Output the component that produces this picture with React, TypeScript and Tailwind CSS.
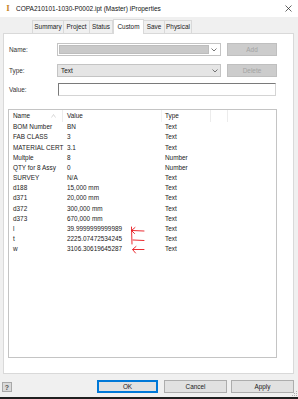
import React from "react";

const rows: [string, string, string][] = [
  ["BOM Number", "BN", "Text"],
  ["FAB CLASS", "3", "Text"],
  ["MATERIAL CERT", "3.1", "Text"],
  ["Multple", "8", "Number"],
  ["QTY for 8 Assy", "0", "Number"],
  ["SURVEY", "N/A", "Text"],
  ["d188", "15,000 mm", "Text"],
  ["d371", "20,000 mm", "Text"],
  ["d372", "300,000 mm", "Text"],
  ["d373", "670,000 mm", "Text"],
  ["l", "39.9999999999989", "Text"],
  ["t", "2225.07472534245", "Text"],
  ["w", "3106.30619645287", "Text"],
];

function Chevron() {
  return (
    <svg width="6" height="4" viewBox="0 0 6 4" className="shrink-0">
      <path d="M0.5 0.5 L3 3 L5.5 0.5" fill="none" stroke="#555" strokeWidth="0.8" />
    </svg>
  );
}

export default function App() {
  const tabs = ["Summary", "Project", "Status", "Custom", "Save", "Physical"];
  const tabW: Record<string, string> = {
    Summary: "w-[32px]",
    Project: "w-[27px]",
    Status: "w-[24px]",
    Custom: "w-[31px]",
    Save: "w-[22px]",
    Physical: "w-[28px]",
  };
  return (
    <div className="w-[298px] h-[399px] bg-[#f0f0f0] flex flex-col font-['Liberation_Sans',Arial,sans-serif] text-[6.4px] text-[#1a1a1a] overflow-hidden relative">
      {/* Title bar */}
      <div className="h-[17px] bg-white flex items-center shrink-0">
        <span className="ml-[4px] w-[8px] text-center font-['Liberation_Serif',serif] font-bold text-[9px] leading-none text-[#c8862a]">I</span>
        <span className="ml-[4px] text-[6.5px] text-[#111]">COPA210101-1030-P0002.ipt (Master) iProperties</span>
        <div className="flex-1" />
        <svg width="7" height="7" viewBox="0 0 7 7" className="mr-[6px]">
          <path d="M0.5 0.5 L6.5 6.5 M6.5 0.5 L0.5 6.5" stroke="#222" strokeWidth="0.7" />
        </svg>
      </div>

      {/* Tabs */}
      <div className="h-[16px] flex items-end pl-[32px] shrink-0">
        {tabs.map((t) =>
          t === "Custom" ? (
            <div
              key={t}
              className={`${tabW[t]} h-[15px] -mb-[1px] bg-white border border-b-0 border-[#d9d9d9] flex items-center justify-center relative z-10`}
            >
              {t}
            </div>
          ) : (
            <div
              key={t}
              className={`${tabW[t]} h-[13px] bg-[#f0f0f0] border border-b-0 border-[#d9d9d9] -ml-[1px] first:ml-0 flex items-center justify-center`}
            >
              {t}
            </div>
          )
        )}
      </div>

      {/* Panel */}
      <div className="ml-[3px] w-[291px] h-[341px] bg-white border border-[#d9d9d9] flex flex-col shrink-0">
        {/* Name row */}
        <div className="mt-[9px] flex items-center h-[13px] pl-[5px]">
          <div className="w-[48px] text-[#333]">Name:</div>
          <div className="w-[164px] h-[13px] border border-[#c4c4c4] bg-white flex items-center p-[1px]">
            <div className="flex-1 h-full bg-[#c9c9c9] border border-[#bdbdbd]" />
            <div className="w-[10px] flex items-center justify-center">
              <Chevron />
            </div>
          </div>
          <div className="ml-[6px] w-[50px] h-[13px] bg-[#cccccc] border border-[#bfbfbf] flex items-center justify-center text-[#a3a3a3]">
            Add
          </div>
        </div>
        {/* Type row */}
        <div className="mt-[8px] flex items-center h-[13px] pl-[5px]">
          <div className="w-[48px] text-[#333]">Type:</div>
          <div className="w-[164px] h-[13px] border border-[#c4c4c4] bg-[#e5e5e5] flex items-center pl-[3px]">
            <span className="flex-1">Text</span>
            <div className="w-[10px] flex items-center justify-center">
              <Chevron />
            </div>
          </div>
          <div className="ml-[6px] w-[50px] h-[13px] bg-[#cccccc] border border-[#bfbfbf] flex items-center justify-center text-[#a3a3a3]">
            Delete
          </div>
        </div>
        {/* Value row */}
        <div className="mt-[6px] flex items-center h-[13px] pl-[5px]">
          <div className="w-[49px] text-[#333]">Value:</div>
          <div className="w-[218px] h-[13px] bg-white border border-[#d4d4d4] border-t-[#7a7a7a] border-l-[#7a7a7a]" />
        </div>

        {/* List view */}
        <div className="mt-[13px] ml-[4px] w-[269px] h-[249px] border border-[#c4c4c4] bg-white flex flex-col relative">
          <div className="h-[12px] flex items-center shrink-0">
            <div className="w-[54px] h-full flex items-center pl-[4px] border-r border-[#ececec] relative">
              Name
              <svg width="5" height="4" viewBox="0 0 5 4" className="absolute right-[6px] top-[4px]">
                <path d="M0.5 3.5 L2.5 0.5 L4.5 3.5" fill="none" stroke="#c8c8c8" strokeWidth="0.7" />
              </svg>
            </div>
            <div className="w-[99px] h-full flex items-center pl-[4px] border-r border-[#f2f2f2]">Value</div>
            <div className="w-[49px] h-full flex items-center pl-[3px] border-r border-[#ececec]">Type</div>
            <div className="w-[17px] h-full border-r border-[#ececec]" />
          </div>
          {rows.map(([n, v, t]) => (
            <div key={n} className="h-[10.17px] flex items-center shrink-0">
              <div className="w-[54px] pl-[4px] whitespace-nowrap">{n}</div>
              <div className="w-[99px] pl-[4px] whitespace-nowrap">{v}</div>
              <div className="w-[49px] pl-[3px]">{t}</div>
            </div>
          ))}
          {/* red annotation arrows */}
          <svg
            width="269"
            height="249"
            viewBox="8 109 269 249"
            className="absolute left-0 top-0 pointer-events-none"
          >
            <g fill="none" stroke="#e8141b" strokeWidth="0.9" strokeLinecap="round" strokeLinejoin="round">
              <path d="M143 230 L131 229.5" />
              <path d="M134 226.5 L130.5 229.5 L133.5 232.5" />
              <path d="M130.5 226 L131 243" />
              <path d="M143 239.5 L132 239" />
              <path d="M143 248.5 L132 248.5" />
              <path d="M135 245.5 L131.5 248.5 L134.5 252" />
            </g>
          </svg>
        </div>
      </div>

      {/* Bottom bar */}
      <div className="flex-1 flex items-start pt-[6px] relative">
        <div className="ml-[2px] mt-[2px] w-[10px] h-[10px] bg-[#dadada] border border-[#a8a8a8] flex items-center justify-center text-[7px] font-bold text-[#555] leading-none">
          ?
        </div>
        <div className="ml-[85px] w-[61px] h-[13px] bg-[#e1e1e1] border-2 border-[#0078d7] flex items-center justify-center">
          OK
        </div>
        <div className="ml-[6px] w-[63px] h-[13px] bg-[#e1e1e1] border border-[#adadad] flex items-center justify-center">
          Cancel
        </div>
        <div className="ml-[4px] w-[63px] h-[13px] bg-[#e1e1e1] border border-[#adadad] flex items-center justify-center">
          Apply
        </div>
        <svg width="5" height="5" viewBox="0 0 5 5" className="absolute right-[1px] bottom-[3px]">
          <g fill="#b0b0b0">
            <rect x="4" y="0" width="1" height="1" />
            <rect x="2" y="2" width="1" height="1" />
            <rect x="4" y="2" width="1" height="1" />
            <rect x="0" y="4" width="1" height="1" />
            <rect x="2" y="4" width="1" height="1" />
            <rect x="4" y="4" width="1" height="1" />
          </g>
        </svg>
        <div className="absolute left-0 right-0 bottom-0 h-[2px] bg-[#1f1f1f]" />
      </div>
    </div>
  );
}
